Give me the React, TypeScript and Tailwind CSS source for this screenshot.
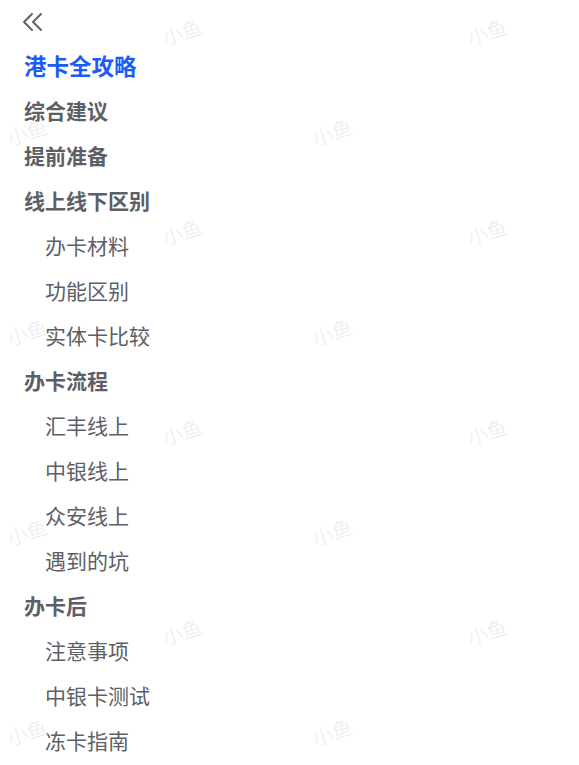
import React from "react";

type Item = { label: string; level: 0 | 1 | 2 };

const items: Item[] = [
  { label: "港卡全攻略", level: 0 },
  { label: "综合建议", level: 1 },
  { label: "提前准备", level: 1 },
  { label: "线上线下区别", level: 1 },
  { label: "办卡材料", level: 2 },
  { label: "功能区别", level: 2 },
  { label: "实体卡比较", level: 2 },
  { label: "办卡流程", level: 1 },
  { label: "汇丰线上", level: 2 },
  { label: "中银线上", level: 2 },
  { label: "众安线上", level: 2 },
  { label: "遇到的坑", level: 2 },
  { label: "办卡后", level: 1 },
  { label: "注意事项", level: 2 },
  { label: "中银卡测试", level: 2 },
  { label: "冻卡指南", level: 2 },
];

const marks: { x: number; y: number }[] = [];
for (let r = 0; r < 8; r++) {
  const y = 32 + r * 100;
  const xs = r % 2 === 0 ? [182, 487] : [27, 332];
  xs.forEach((x) => marks.push({ x, y }));
}

export default function App() {
  return (
    <div
      className="relative w-[579px] h-[765px] overflow-hidden bg-white"
      style={{ fontFamily: '"Noto Sans CJK SC", "Noto Sans", sans-serif' }}
    >
      <div className="flex flex-col">
        <div className="h-[43px] flex items-center pl-[22px]">
          <svg width="22" height="20" viewBox="0 0 22 20" fill="none" stroke="#5f6368" strokeWidth="2" strokeLinecap="round" strokeLinejoin="round">
            <path d="M10 2 L2 10 L10 18" />
            <path d="M19 2 L11 10 L19 18" />
          </svg>
        </div>
        {items.map((it) => (
          <div
            key={it.label}
            className={
              it.level === 0
                ? "h-[45px] flex items-center pl-[24px] text-[22.5px] font-bold text-[#1a5cf5]"
                : it.level === 1
                ? "h-[45px] flex items-center pl-[24px] text-[21px] font-bold text-[#5c5f66]"
                : "h-[45px] flex items-center pl-[45px] text-[21px] font-normal text-[#5c5f66]"
            }
          >
            {it.label}
          </div>
        ))}
      </div>
      <div className="pointer-events-none absolute inset-0">
        {marks.map((m, i) => (
          <span
            key={i}
            className="absolute text-[20px] leading-none font-light text-[#ececee] -rotate-[18deg] -translate-x-1/2 -translate-y-1/2 whitespace-nowrap"
            style={{ left: m.x, top: m.y }}
          >
            小鱼
          </span>
        ))}
      </div>
    </div>
  );
}
